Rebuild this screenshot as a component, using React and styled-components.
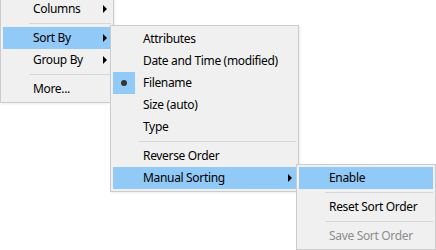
import styled, { createGlobalStyle } from "styled-components";

const GlobalStyle = createGlobalStyle`
  html, body {
    margin: 0;
    padding: 0;
    background: #ffffff;
  }
  body {
    font-family: "Noto Sans", "Liberation Sans", sans-serif;
    font-size: 12px;
    letter-spacing: -0.33px;
    color: #000000;
  }
`;

const Canvas = styled.div`
  position: relative;
  width: 436px;
  height: 250px;
  overflow: hidden;
  background: #ffffff;
`;

const Menu = styled.div`
  position: absolute;
  left: ${(p) => p.$left}px;
  top: ${(p) => p.$top}px;
  width: ${(p) => p.$width}px;
  box-sizing: border-box;
  background: #f0f0f0;
  border: 1px solid #cccccc;
  padding: 2px;
  display: flex;
  flex-direction: column;
  box-shadow: 1px 1px 2px rgba(0, 0, 0, 0.08);
`;

const Item = styled.div`
  height: 22px;
  display: grid;
  grid-template-columns: 30px 1fr 12px;
  align-items: center;
  background: ${(p) => (p.$active ? "#91c9f7" : "transparent")};
  color: ${(p) => (p.$disabled ? "#8d8d8d" : "#000000")};
  white-space: nowrap;
`;

const Gutter = styled.div`
  width: 22px;
  height: 22px;
  display: flex;
  align-items: center;
  justify-content: center;
  background: ${(p) => (p.$checked ? "#91c9f7" : "transparent")};
`;

const Dot = styled.span`
  width: 6px;
  height: 6px;
  border-radius: 50%;
  background: #333333;
`;

const Label = styled.span`
  line-height: 22px;
`;

const Arrow = styled.span`
  justify-self: end;
  margin-right: 4px;
  width: 0;
  height: 0;
  border-top: 4px solid transparent;
  border-bottom: 4px solid transparent;
  border-left: 4px solid #000000;
`;

const Separator = styled.div`
  height: 1px;
  margin: 3px 0 3px 26px;
  background: #d7d7d7;
`;

const MenuItem = ({ label, active, disabled, checked, sub }) => (
  <Item $active={active} $disabled={disabled}>
    <Gutter $checked={checked}>{checked && <Dot />}</Gutter>
    <Label>{label}</Label>
    {sub ? <Arrow /> : <span />}
  </Item>
);

const App = () => {
  return (
    <>
      <GlobalStyle />
      <Canvas>
        <Menu $left={0} $top={-5} $width={114}>
          <MenuItem label="Columns" sub />
          <Separator />
          <MenuItem label="Sort By" sub active />
          <MenuItem label="Group By" sub />
          <Separator />
          <MenuItem label="More..." />
        </Menu>
        <Menu $left={110} $top={25} $width={189}>
          <MenuItem label="Attributes" />
          <MenuItem label="Date and Time (modified)" />
          <MenuItem label="Filename" checked />
          <MenuItem label="Size (auto)" />
          <MenuItem label="Type" />
          <Separator />
          <MenuItem label="Reverse Order" />
          <MenuItem label="Manual Sorting" sub active />
        </Menu>
        <Menu $left={296} $top={164} $width={140}>
          <MenuItem label="Enable" active />
          <Separator />
          <MenuItem label="Reset Sort Order" />
          <Separator />
          <MenuItem label="Save Sort Order" disabled />
        </Menu>
      </Canvas>
    </>
  );
};

export default App;
